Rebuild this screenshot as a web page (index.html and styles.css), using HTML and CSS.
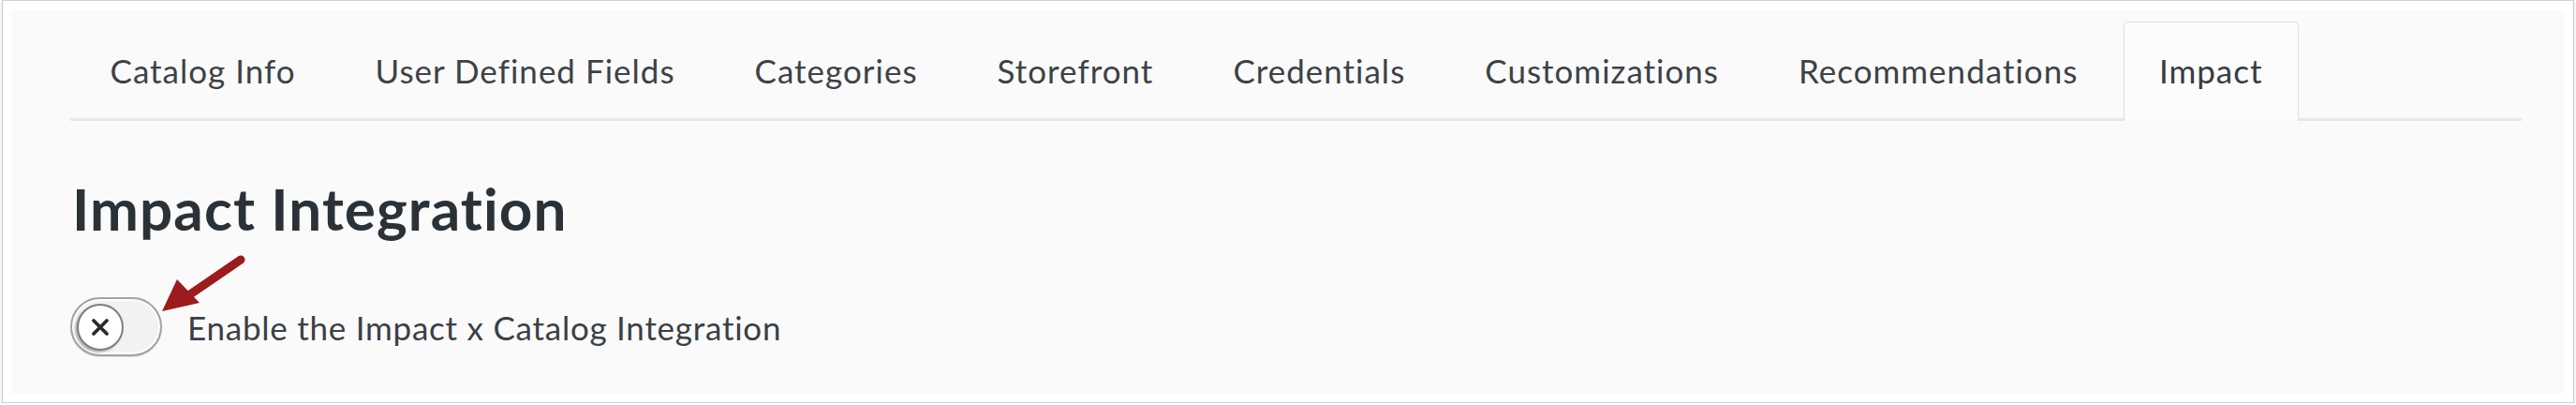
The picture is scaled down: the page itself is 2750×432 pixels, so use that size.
FILE: index.html
```html
<!DOCTYPE html>
<html lang="en">
<head>
<meta charset="utf-8">
<title>Impact Integration</title>
<link rel="stylesheet" href="styles.css">
</head>
<body>
<div class="frame">
  <div class="panel">
    <nav class="tabs">
      <div class="tab">Catalog Info</div>
      <div class="tab">User Defined Fields</div>
      <div class="tab">Categories</div>
      <div class="tab">Storefront</div>
      <div class="tab">Credentials</div>
      <div class="tab">Customizations</div>
      <div class="tab">Recommendations</div>
      <div class="tab active">Impact</div>
    </nav>
    <h1 class="title">Impact Integration</h1>
    <div class="toggle-row">
      <div class="toggle">
        <div class="knob">
          <svg class="xmark" viewBox="0 0 20 20" width="20" height="20">
            <path d="M3 3 L17 17 M17 3 L3 17" stroke="#2b2b2b" stroke-width="3.8" stroke-linecap="round" fill="none"/>
          </svg>
        </div>
      </div>
      <span class="label">Enable the Impact x Catalog Integration</span>
      <svg class="arrow" viewBox="0 0 100 70" width="100" height="70">
        <path d="M84 5 L30 42" stroke="#9c1b1d" stroke-width="9" stroke-linecap="round" fill="none"/>
        <polygon points="0,60 16,26 40,51" fill="#9c1b1d"/>
      </svg>
    </div>
  </div>
</div>
</body>
</html>
```

FILE: styles.css
```css
html, body {
  margin: 0;
  padding: 0;
  background: #ffffff;
}

body {
  padding: 0 2px;
  font-family: Lato, "Open Sans", "Liberation Sans", sans-serif;
}

.frame {
  border: 1px solid #d0d0d0;
  box-shadow: 0 1px 2px rgba(0, 0, 0, 0.22);
  padding: 10px 10px 9px 9px;
  box-sizing: border-box;
  height: 430px;
  background: #ffffff;
}

.panel {
  height: 100%;
  box-sizing: border-box;
  background: #fafafa;
  padding: 12px 45px 0 63px;
}

.tabs {
  display: flex;
  border-bottom: 3px solid #e7e7e7;
  height: 103px;
}

.tab {
  padding: 0 41.5px;
  border: 1px solid transparent;
  border-bottom: none;
  font-size: 35px;
  letter-spacing: 1px;
  color: #3c4247;
  display: flex;
  align-items: center;
  height: 103px;
  box-sizing: border-box;
}

.tab.active {
  background: #fcfcfc;
  border-color: #dedede;
  border-radius: 5px 5px 0 0;
  height: 106px;
  margin-bottom: -3px;
  margin-left: 6px;
  padding: 0 38px 3px 37px;
  color: #363c41;
}

.title {
  margin: 56px 0 0 2px;
  font-size: 62px;
  letter-spacing: 1.1px;
  line-height: 1.2;
  font-weight: 700;
  color: #2b3237;
}

.toggle-row {
  position: relative;
  display: flex;
  align-items: center;
  margin-top: 58px;
}

.toggle {
  width: 98px;
  height: 63px;
  box-sizing: border-box;
  border: 2px solid #a3a3a3;
  border-radius: 32px;
  background: #f2f2f2;
  display: flex;
  align-items: center;
  padding-left: 5px;
  box-shadow: inset 0 0 0 2px #ffffff, 0 1px 1px rgba(0, 0, 0, 0.12);
}

.knob {
  width: 50px;
  height: 50px;
  box-sizing: border-box;
  border-radius: 50%;
  background: #ffffff;
  border: 2px solid #7e7e7e;
  display: flex;
  align-items: center;
  justify-content: center;
  box-shadow: -2px 2px 2px rgba(0, 0, 0, 0.25);
}

.label {
  margin-left: 27px;
  font-size: 35px;
  letter-spacing: 0.75px;
  color: #3a4045;
}

.arrow {
  position: absolute;
  left: 98px;
  top: -45px;
}
```
